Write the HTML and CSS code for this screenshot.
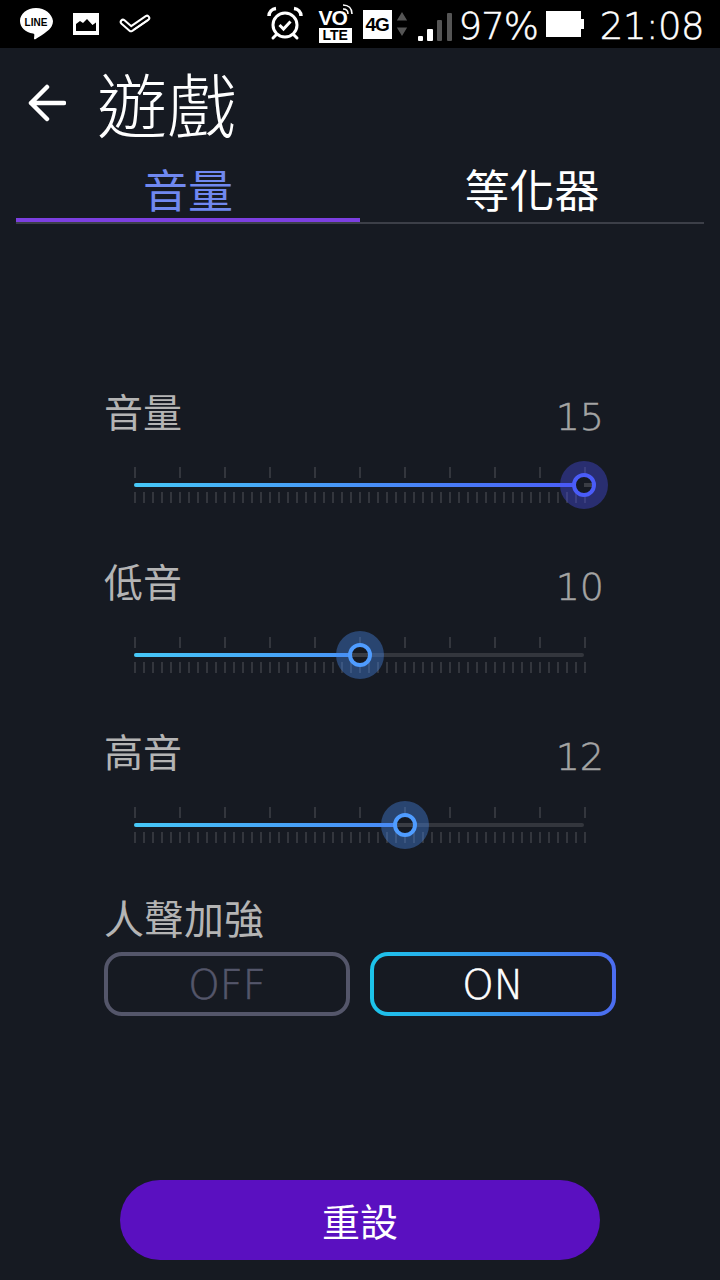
FILE: index.html
```html
<!DOCTYPE html>
<html>
<head>
    <title>遊戲</title>
    <link rel="stylesheet" href="styles.css">
</head>
<body>
    <div class="statusbar">
        <div class="status-left">
            <svg class="ic-line" width="34" height="34" viewBox="0 0 34 34">
                <path d="M17 1C8 1 1 6.800 1 14c0 6.500 5.500 11.500 13 12.600 1 .2 1.500.6 1.300 1.800l-.3 3c0 1 .8 1.200 1.800.6 3-1.800 14.200-8.600 16-13 .8-1.700 1.200-3.300 1.200-5C33 6.800 26 1 17 1z" fill="#fff"/>
                <text x="17" y="18.500" class="line-text">LINE</text>
            </svg>
            <svg width="26" height="22" viewBox="0 0 26 22">
                <path fill-rule="evenodd" d="M0 0h26v22H0z M3 18h20V9.500l-3.500 2.500L14 6l-4 4-3-2-4 3z" fill="#fff"/>
            </svg>
            <svg width="32" height="20" viewBox="0 0 32 20">
                <path d="M4 8l8 7L28 4" fill="none" stroke="#fff" stroke-width="6.500" stroke-linecap="round" stroke-linejoin="round"/>
                <path d="M4 8l8 7M12 15L28 4" fill="none" stroke="#000" stroke-width="2.500" stroke-linecap="round"/>
                <path d="M15 15.500L29 6" fill="none" stroke="#fff" stroke-width="1.600"/>
            </svg>
        </div>
        <div class="status-right">
            <svg class="ic-alarm" width="36" height="36" viewBox="0 0 36 36">
                <circle cx="18" cy="19" r="12" fill="none" stroke="#fff" stroke-width="3"/>
                <path d="M12.500 19l4 4 7-7.500" fill="none" stroke="#fff" stroke-width="3"/>
                <path d="M2 10C2 6 5 3 9 2.500M34 10c0-4-3-7-7-7.500" fill="none" stroke="#fff" stroke-width="3.500"/>
                <path d="M9 29l-3 3M27 29l3 3" stroke="#fff" stroke-width="3" stroke-linecap="round"/>
            </svg>
            <div class="volte">
                <span class="vo">VO</span>
                <span class="lte">LTE</span>
                <svg class="wifi-arc" width="12" height="12" viewBox="0 0 12 12">
                    <path d="M1 5c3 0 5 2 5 5M1 1c5.500 0 9 3.500 9 9" fill="none" stroke="#fff" stroke-width="1.600"/>
                </svg>
            </div>
            <span class="net-4g">4G</span>
            <svg class="ic-updown" width="12" height="26" viewBox="0 0 14 28">
                <path d="M7 0l6 10H1zM7 28L1 18h12z" fill="#555"/>
            </svg>
            <svg class="ic-signal" width="34" height="28" viewBox="0 0 34 28">
                <rect x="0" y="23" width="5" height="5" rx="1" fill="#fff"/>
                <rect x="9" y="16" width="6" height="12" rx="1" fill="#fff"/>
                <rect x="19" y="7" width="5" height="21" rx="1" fill="#555"/>
                <rect x="29" y="0" width="5" height="28" rx="1" fill="#555"/>
            </svg>
            <span class="batt-text">97%</span>
            <svg class="ic-batt" width="38" height="26" viewBox="0 0 38 26">
                <path d="M0 0h35v8h3v10h-3v8H0z" fill="#fff"/>
            </svg>
            <span class="clock">21:08</span>
        </div>
    </div>

    <div class="page">
        <div class="header">
            <svg width="38" height="38" viewBox="0 0 38 38">
                <path d="M36 19H3M19 3L3 19l16 16" fill="none" stroke="#fff" stroke-width="4.500" stroke-linecap="round" stroke-linejoin="round"/>
            </svg>
            <h1>遊戲</h1>
        </div>

        <div class="tabs">
            <div class="tab active">音量</div>
            <div class="tab">等化器</div>
        </div>

        <div class="sliders">
            <div class="slider-row">
                <div class="slider-head"><span>音量</span><span class="val">15</span></div>
                <div class="slider">
                    <div class="ticks-top"></div>
                    <div class="track"><div class="fill" style="width: 450px"></div></div>
                    <div class="ticks-bottom"></div>
                    <div class="thumb thumb-end" style="left: 450px"><div class="ring"></div></div>
                </div>
            </div>
            <div class="slider-row">
                <div class="slider-head"><span>低音</span><span class="val">10</span></div>
                <div class="slider">
                    <div class="ticks-top"></div>
                    <div class="track"><div class="fill" style="width: 226px"></div></div>
                    <div class="ticks-bottom"></div>
                    <div class="thumb" style="left: 226px"><div class="ring"></div></div>
                </div>
            </div>
            <div class="slider-row">
                <div class="slider-head"><span>高音</span><span class="val">12</span></div>
                <div class="slider">
                    <div class="ticks-top"></div>
                    <div class="track"><div class="fill" style="width: 271px"></div></div>
                    <div class="ticks-bottom"></div>
                    <div class="thumb" style="left: 271px"><div class="ring"></div></div>
                </div>
            </div>
        </div>

        <div class="voice">
            <div class="voice-label">人聲加強</div>
            <div class="toggle">
                <div class="btn btn-off">OFF</div>
                <div class="btn btn-on">ON</div>
            </div>
        </div>

        <div class="reset">重設</div>
    </div>
</body>
</html>
```

FILE: styles.css
```css
html, body {
    margin: 0;
    padding: 0;
}

body {
    width: 720px;
    height: 1280px;
    overflow: hidden;
    background-color: #161a22;
    color: #fff;
    font-family: "Noto Sans CJK TC", "Noto Sans", sans-serif;
}

.statusbar {
    height: 48px;
    background-color: #000;
    display: flex;
    justify-content: space-between;
    align-items: center;
    padding: 0 16px 0 19px;
}

.status-left {
    display: flex;
    align-items: center;
    gap: 20px;
}

.status-left svg {
    display: block;
}

.line-text {
    font-family: "Liberation Sans", sans-serif;
    font-size: 10px;
    font-weight: 700;
    text-anchor: middle;
    fill: #000;
}

.status-right {
    display: flex;
    align-items: center;
}

.status-right svg {
    display: block;
}

.volte {
    position: relative;
    width: 33px;
    height: 40px;
    margin-left: 16px;
    text-align: center;
    font-family: "Liberation Sans", sans-serif;
    font-weight: 700;
}

.vo {
    display: block;
    font-size: 21px;
    line-height: 20px;
    margin-top: 4px;
    text-align: left;
    letter-spacing: -1px;
}

.lte {
    display: block;
    background-color: #fff;
    color: #000;
    font-size: 14px;
    line-height: 15px;
}

.wifi-arc {
    position: absolute;
    top: 0;
    right: -2px;
}

.net-4g {
    width: 29px;
    height: 29px;
    margin-left: 11px;
    background-color: #fff;
    color: #000;
    font-family: "Liberation Sans", sans-serif;
    font-weight: 700;
    font-size: 19px;
    line-height: 29px;
    text-align: center;
    letter-spacing: -1px;
}

.ic-updown {
    margin-left: 4px;
}

.ic-signal {
    margin-left: 10px;
    margin-top: 6px;
}

.batt-text,
.clock {
    font-family: "DejaVu Sans", sans-serif;
    font-weight: 200;
    font-size: 37px;
    line-height: 48px;
    margin-top: 6px;
    -webkit-text-stroke: 0.5px #fff;
}

.batt-text {
    margin-left: 7px;
    letter-spacing: -1px;
}

.ic-batt {
    margin-left: 8px;
}

.clock {
    margin-left: 16px;
    letter-spacing: -0.5px;
}

.page {
    height: 1232px;
    display: flex;
    flex-direction: column;
    position: relative;
}

.header {
    display: flex;
    align-items: center;
    height: 110px;
    padding-left: 28px;
}

.header h1 {
    margin: 0 0 0 31px;
    font-size: 70px;
    font-weight: 300;
    line-height: 110px;
}

.tabs {
    display: flex;
    margin: 0 16px;
    height: 64px;
    border-bottom: 2px solid #3c3f48;
}

.tab {
    flex: 1;
    text-align: center;
    font-size: 45px;
    line-height: 62px;
}

.tab.active {
    color: #7088f0;
    border-bottom: 4px solid #7c3fe0;
    height: 60px;
    margin-bottom: -2px;
}

.sliders {
    margin-top: 148px;
    padding: 0 116px 0 104px;
}

.slider-row {
    height: 170px;
}

.slider-head {
    display: flex;
    justify-content: space-between;
    align-items: flex-start;
    height: 95px;
    font-size: 39px;
    line-height: 76px;
    color: #b4b4b4;
}

.val {
    font-family: "DejaVu Sans", sans-serif;
    font-weight: 200;
    font-size: 38px;
    color: #a4a4a4;
    -webkit-text-stroke: 0.5px #a4a4a4;
    margin-top: 7px;
}

.slider {
    position: relative;
    margin-left: 30px;
    width: 450px;
}

.ticks-top,
.ticks-bottom {
    width: 452px;
}

.ticks-top {
    height: 11px;
    background: repeating-linear-gradient(to right, #33363d 0, #33363d 2px, transparent 2px, transparent 45px);
}

.track {
    height: 4px;
    margin-top: 5px;
    background-color: #33363d;
    border-radius: 2px;
}

.fill {
    height: 100%;
    border-radius: 2px;
    background: linear-gradient(to right, #46c8f8, #4a5cf8) left / 450px 100% no-repeat;
}

.ticks-bottom {
    height: 11px;
    margin-top: 5px;
    background: repeating-linear-gradient(to right, #33363d 0, #33363d 2px, transparent 2px, transparent 9px);
}

.thumb {
    position: absolute;
    top: -6px;
    width: 48px;
    height: 48px;
    margin-left: -24px;
    border-radius: 50%;
    background-color: rgba(74, 140, 240, 0.38);
    display: flex;
    align-items: center;
    justify-content: center;
}

.thumb-end {
    background-color: rgba(74, 80, 240, 0.38);
}

.ring {
    width: 16px;
    height: 16px;
    border: 4px solid #4f9cff;
    border-radius: 50%;
    background: linear-gradient(to bottom, #161a22 6px, #3a3d44 6px, #3a3d44 10px, #161a22 10px);
}

.thumb-end .ring {
    border-color: #4a5cf8;
    background: linear-gradient(to bottom, #161a22 6px, #3a3d44 6px, #3a3d44 10px, #161a22 10px) right / 8px 16px no-repeat #161a22;
}

.voice {
    margin-top: 7px;
    padding: 0 104px;
}

.voice-label {
    font-size: 40px;
    line-height: 56px;
    color: #b4b4b4;
}

.toggle {
    display: flex;
    gap: 20px;
    margin-top: 7px;
}

.btn {
    width: 246px;
    height: 64px;
    box-sizing: border-box;
    border: 4px solid #54566a;
    border-radius: 18px;
    text-align: center;
    font-family: "DejaVu Sans", sans-serif;
    font-weight: 200;
    font-size: 40px;
    line-height: 58px;
    -webkit-text-stroke: 0.6px;
}

.btn-off {
    color: #54566a;
}

.btn-on {
    color: #fff;
    border-color: transparent;
    background: linear-gradient(#161a22, #161a22) padding-box, linear-gradient(to right, #1cc4ea, #4c6cf0) border-box;
}

.reset {
    position: absolute;
    left: 120px;
    top: 1132px;
    width: 480px;
    height: 80px;
    border-radius: 40px;
    background-color: #5a10c0;
    text-align: center;
    font-size: 38px;
    line-height: 80px;
}
```
